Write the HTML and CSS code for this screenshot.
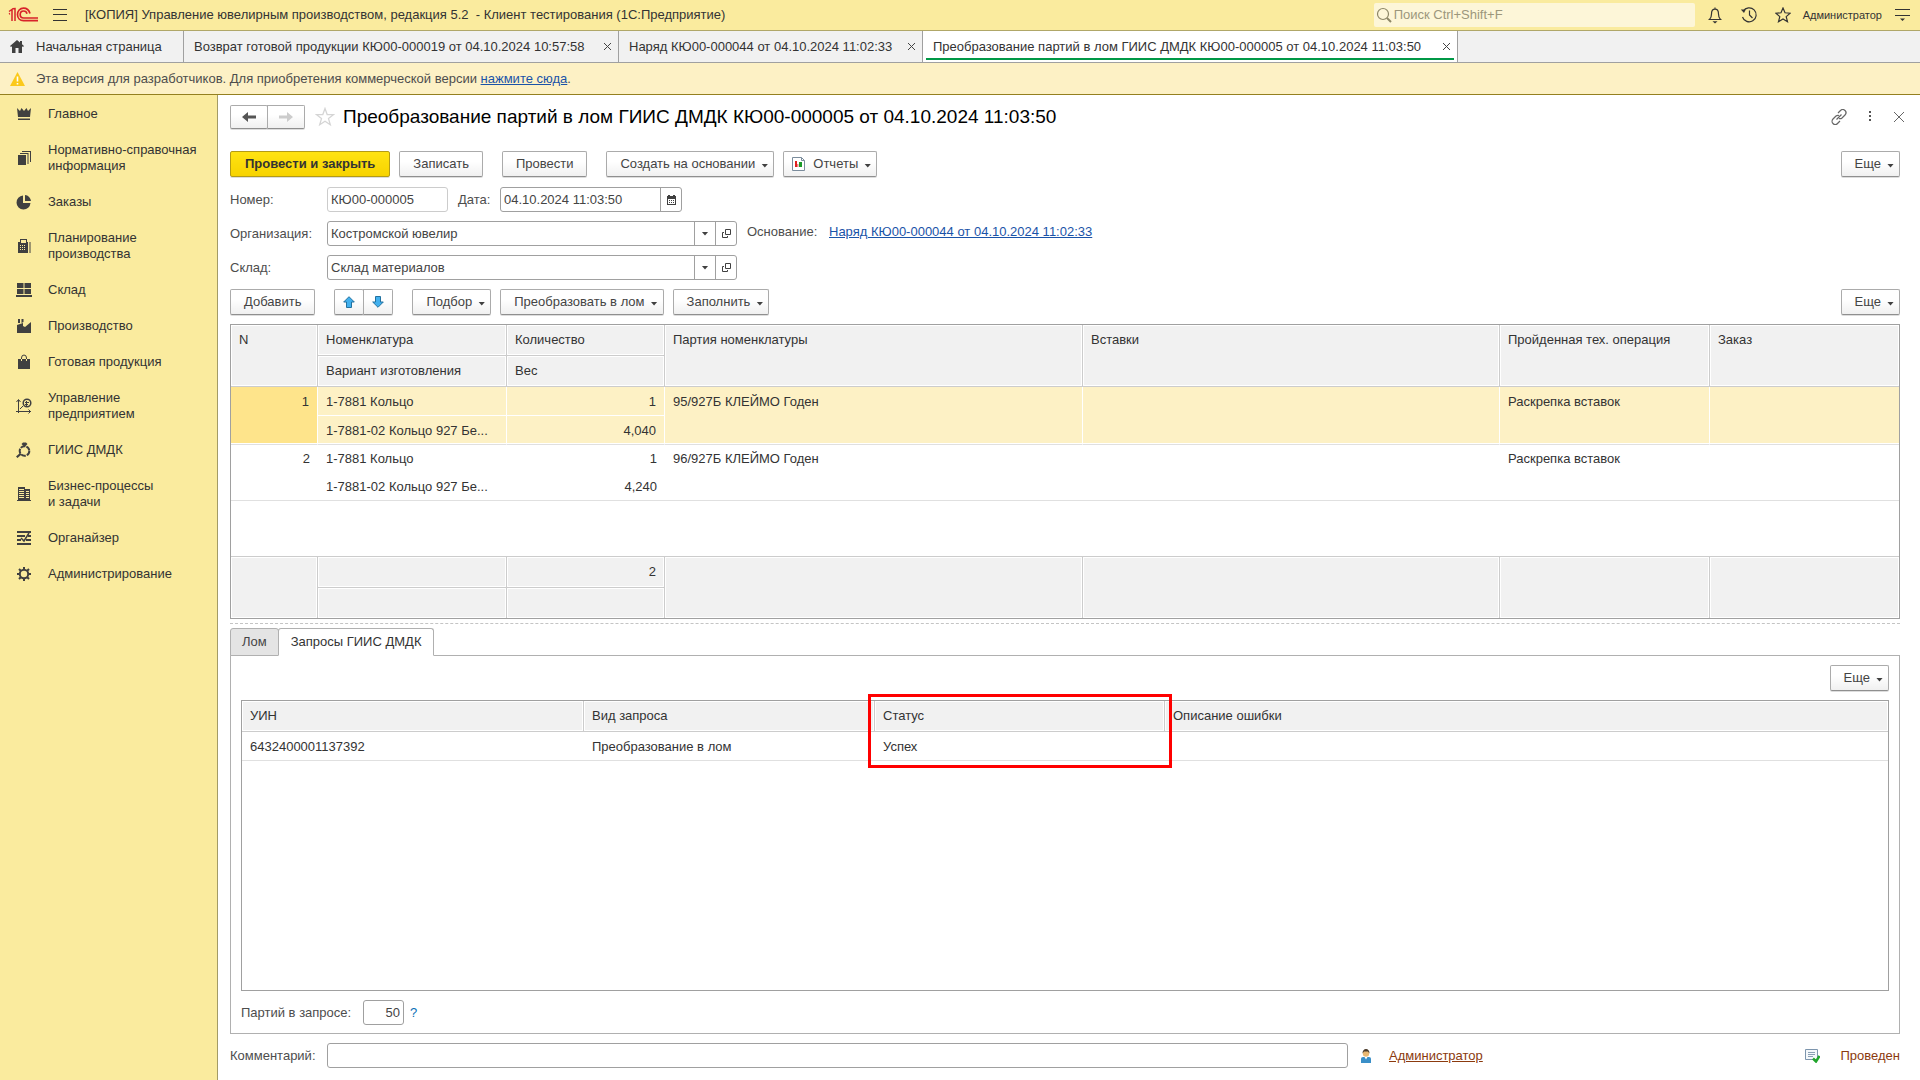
FILE: index.html
```html
<!DOCTYPE html>
<html lang="ru">
<head>
<meta charset="utf-8">
<title>Преобразование партий в лом ГИИС ДМДК</title>
<link rel="stylesheet" href="styles.css">
</head>
<body>
<header class="topbar">
  <svg class="logo" width="30" height="16" viewBox="0 0 30 16" fill="none" stroke="#d8232a"><path d="M1 4.500L4 2.500V14M1 7l1-.5M7 14V1.500L4.500 1.800" stroke-width="1.500"/><path d="M22 6.500C21 3 18.500 1.200 15.500 1.200c-3.500 0-6 2.800-6 6.300s2.500 6.200 6 6.200H30" stroke-width="1.700"/><path d="M19 6.800C18.600 5 17.300 4 15.600 4 13.500 4 12.200 5.600 12.200 7.500s1.400 3.500 3.400 3.500H30" stroke-width="1.700"/></svg>
  <button class="icon-btn burger" aria-label="Меню"><svg width="14" height="12" viewBox="0 0 14 12" stroke="#333"><path d="M0 .5h14M0 5.500h14M0 11.500h14"/></svg></button>
  <span class="app-title">[КОПИЯ] Управление ювелирным производством, редакция 5.2&nbsp; - Клиент тестирования (1С:Предприятие)</span>
  <div class="search">
    <svg width="16" height="16" viewBox="0 0 16 16" fill="none" stroke="#8d8767" stroke-width="1.200"><circle cx="7" cy="7" r="5.500"/><path d="M11 11l4 4" stroke-width="2"/></svg>
    <input type="text" placeholder="Поиск Ctrl+Shift+F" aria-label="Поиск">
  </div>
  <div class="top-tools">
    <button class="icon-btn" aria-label="Оповещения"><svg width="16" height="18" viewBox="0 0 16 18" fill="none" stroke="#333" stroke-width="1.200"><path d="M8 1.500v1.500M1.500 13.500h13M2.500 13.500c1.700-1.500 2-3 2-5.500C4.500 5 6 3.200 8 3.200S11.500 5 11.500 8c0 2.500.3 4 2 5.500"/><path d="M5.500 15.200h5L8 17.500z" fill="#333" stroke="none"/></svg></button>
    <button class="icon-btn" aria-label="История"><svg width="18" height="18" viewBox="0 0 18 18" fill="none" stroke="#333" stroke-width="1.200"><path d="M3.200 5.200A7 7 0 1 1 2.500 11"/><path d="M9.500 4.500V9l3 3"/><path d="M.8 3.500h5L4 7z" fill="#333" stroke="none"/></svg></button>
    <button class="icon-btn" aria-label="Избранное"><svg width="16" height="16" viewBox="0 0 16 16" fill="none" stroke="#333" stroke-width="1.200"><path d="M8 1l2 4.800 5.200.4-4 3.400 1.300 5.100L8 12l-4.500 2.700 1.300-5.100-4-3.400L6 5.800z"/></svg></button>
  </div>
  <span class="user">Администратор</span>
  <button class="icon-btn" aria-label="Настройки"><svg width="15" height="14" viewBox="0 0 15 14" stroke="#333"><path d="M0 1.500h15M0 7.500h15"/><path d="M5 10.500h5L7.500 13z" fill="#333" stroke="none"/></svg></button>
</header>

<nav class="tabs">
  <a class="tab tab-home" href="#"><svg width="14" height="13" viewBox="0 0 14 13" fill="#404040"><path d="M7 0L0 6l1 1 1-.8V13h3.500V8h3v5H12V6.200l1 .8 1-1-2-1.700V1h-2v1.600z"/></svg>Начальная страница</a>
  <div class="tab tab-return"><a href="#">Возврат готовой продукции КЮ00-000019 от 04.10.2024 10:57:58</a><button class="icon-btn" aria-label="Закрыть"><svg width="7" height="7" viewBox="0 0 7 7" stroke="#444"><path d="M0 0l7 7M7 0L0 7"/></svg></button></div>
  <div class="tab tab-order"><a href="#">Наряд КЮ00-000044 от 04.10.2024 11:02:33</a><button class="icon-btn" aria-label="Закрыть"><svg width="7" height="7" viewBox="0 0 7 7" stroke="#444"><path d="M0 0l7 7M7 0L0 7"/></svg></button></div>
  <div class="tab tab-scrap active"><a href="#">Преобразование партий в лом ГИИС ДМДК КЮ00-000005 от 04.10.2024 11:03:50</a><button class="icon-btn" aria-label="Закрыть"><svg width="7" height="7" viewBox="0 0 7 7" stroke="#444"><path d="M0 0l7 7M7 0L0 7"/></svg></button></div>
</nav>

<div class="banner">
  <svg width="15" height="14" viewBox="0 0 15 14"><path d="M7.500 0L15 14H0z" fill="#fbc91b"/><path d="M7.500 4.500v5M7.500 11v1.500" stroke="#fff" stroke-width="1.600"/></svg>
  <p>Эта версия для разработчиков. Для приобретения коммерческой версии <a href="#">нажмите сюда</a>.</p>
</div>

<div class="body">
  <aside class="sidebar">
    <a href="#"><svg viewBox="0 0 16 16"><path d="M1 2l3 3 1.500-3L8 5l2.500-3L12 5l3-3-1 9H2zM2 12.500h12V14H2z"/></svg>Главное</a>
    <a href="#"><svg viewBox="0 0 16 16"><path d="M2 5h8v10H2zM4 3h8.500v11h-1V4H4zM6 1h9v11h-1V2H6z"/></svg>Нормативно-справочная информация</a>
    <a href="#"><svg viewBox="0 0 16 16"><path d="M7 1.500A7 7 0 1 0 14.500 9H7zM9 1v6h6A6.500 6.500 0 0 0 9 1z"/></svg>Заказы</a>
    <a href="#"><svg viewBox="0 0 16 16"><path fill-rule="evenodd" d="M4 1h7v3h1v11H2V4h2zM5 2v3h5V2zM4 7v1h1V7zm2 0v1h1V7zm2 0v1h1V7zM4 9v1h1V9zm2 0v1h1V9zm2 0v1h1V9zm-4 2v1h1v-1zm2 0v1h1v-1zm2 0v1h1v-1zM13.500 4h1v11h-1z"/></svg>Планирование<br>производства</a>
    <a href="#"><svg viewBox="0 0 16 16"><path d="M1 1h6.500v5H1zM8.500 1H15v5H8.500zM1 7h6.500v5H1zM8.500 7H15v5H8.500zM0 13h16v2H0z"/></svg>Склад</a>
    <a href="#"><svg viewBox="0 0 16 16"><path d="M2 1h2v4H2zM5.500 1h2v3l-2 1zM1 7l6-2v3l2 1 6-5v11H1z"/></svg>Производство</a>
    <a href="#"><svg viewBox="0 0 16 16"><path d="M2 5h12v10H2z"/><path d="M5.500 5V4q0-3 2.500-3t2.500 3v1" fill="none" stroke="#404040"/><path d="M5.500 5v2M10.500 5v2" stroke="#faeb9e"/></svg>Готовая продукция</a>
    <a href="#"><svg viewBox="0 0 16 16"><path d="M2.500 15V2M0 13.500h15M.5 4l2-2.500 2 2.500M12.500 11.500l2 2-2 2M4 11l3-3" fill="none" stroke="#404040"/><circle cx="11" cy="5" r="3.800" fill="none" stroke="#404040" stroke-width="1.500"/><path d="M9 4h4v1H9zM9 6h3v1H9zM10 3h1v5h-1z"/></svg>Управление предприятием</a>
    <a href="#"><svg viewBox="0 0 16 16"><circle cx="8.500" cy="9" r="4.800" fill="none" stroke="#404040" stroke-width="2" stroke-dasharray="5 1"/><path d="M5.500 2l1.500-1.500h3L11.500 2 8.500 5zM4 11l1.500 1.500L1.500 16 0 14.500z"/></svg>ГИИС ДМДК</a>
    <a href="#"><svg viewBox="0 0 16 16"><path fill-rule="evenodd" d="M2 1h7v2h5v11h1v1H1v-1h1zM3 3v1h5V3zm0 2v1h5V5zm0 2v1h5V7zm0 2v1h5V9zm0 2v1h5v-1zM10 5v1h3V5zm0 2v1h3V7zm0 2v1h3V9zm0 2v1h3v-1z"/></svg>Бизнес-процессы<br>и задачи</a>
    <a href="#"><svg viewBox="0 0 16 16"><path d="M1 1h14v2H1zM1 5h8v2H1zM12 5h3v2h-3zM1 9h4v2H1zM10 9h5v2h-5zM1 13h14v2H1z"/><path d="M5 8l3 3 5-8" fill="none" stroke="#404040" stroke-width="1.500"/></svg>Органайзер</a>
    <a href="#"><svg viewBox="0 0 16 16"><circle cx="8" cy="8" r="4.200" fill="none" stroke="#404040" stroke-width="2"/><path d="M8 1v3M8 12v3M1 8h3M12 8h3M3 3l2 2M11 11l2 2M13 3l-2 2M5 11l-2 2" stroke="#404040" stroke-width="2"/></svg>Администрирование</a>
  </aside>

  <main class="main">
    <div class="head">
      <div class="pair nav-pair">
        <button class="btn" aria-label="Назад"><svg width="14" height="10" viewBox="0 0 14 10" fill="#555"><path d="M0 5l6-5v3.500h8v3H6V10z"/></svg></button>
        <button class="btn" aria-label="Вперед"><svg width="14" height="10" viewBox="0 0 14 10" fill="#ccc"><path d="M14 5L8 0v3.500H0v3h8V10z"/></svg></button>
      </div>
      <button class="icon-btn fav" aria-label="В избранное"><svg width="20" height="20" viewBox="0 0 20 20" fill="none" stroke="#d5d5d5" stroke-width="1.300"><path d="M10 1.500l2.200 6 6.300.2-5 3.900 1.800 6.200L10 14.200l-5.300 3.600 1.800-6.200-5-3.900 6.300-.2z"/></svg></button>
      <h1>Преобразование партий в лом ГИИС ДМДК КЮ00-000005 от 04.10.2024 11:03:50</h1>
      <div class="head-tools">
        <button class="icon-btn" aria-label="Ссылка"><svg width="16" height="16" viewBox="0 0 16 16" fill="none" stroke="#666" stroke-width="1.200"><path d="M7 4l2.500-2.500a2.900 2.900 0 0 1 4.500 4.500L11 9a3 3 0 0 1-3 .5M9 12l-2.500 2.500A2.900 2.900 0 0 1 2 10l3-3a3 3 0 0 1 3-.5M5.500 10.500l5-5"/></svg></button>
        <button class="icon-btn" aria-label="Действия"><svg width="3" height="11" viewBox="0 0 3 11" fill="#555"><path d="M0 0h2v2H0zM0 4h2v2H0zM0 8h2v2H0z"/></svg></button>
        <button class="icon-btn" aria-label="Закрыть"><svg width="10" height="10" viewBox="0 0 10 10" stroke="#666"><path d="M0 0l10 10M10 0L0 10"/></svg></button>
      </div>
    </div>

    <div class="toolbar">
      <button class="btn primary">Провести и закрыть</button>
      <button class="btn">Записать</button>
      <button class="btn apart">Провести</button>
      <button class="btn drop apart">Создать на основании</button>
      <button class="btn drop with-icon"><svg width="13" height="14" viewBox="0 0 13 14"><path d="M.5.500h9l3 3v10H.5z" fill="#fff" stroke="#7b8c9c"/><path d="M9.500.500v3h3" fill="none" stroke="#7b8c9c"/><path d="M3 4h2v6H3z" fill="#e02020"/><path d="M5 7h1.500v3H5z" fill="#e88"/><path d="M7 5h3v5H7z" fill="#1a9a28"/></svg>Отчеты</button>
      <button class="btn drop last">Еще</button>
    </div>

    <div class="form">
      <div class="row">
        <label for="num">Номер:</label>
        <input id="num" class="field num" type="text" value="КЮ00-000005">
        <label class="date-label" for="date">Дата:</label>
        <div class="combo date"><input id="date" type="text" value="04.10.2024 11:03:50"><button aria-label="Календарь"><svg width="9" height="10" viewBox="0 0 9 10"><path fill="#404040" fill-rule="evenodd" d="M0 1h1V0h2v1h3V0h2v1h1v9H0zM1 4v5h7V4z"/><path fill="#404040" d="M2 5h1v1H2zM4 5h1v1H4zM6 5h1v1H6zM2 7h1v1H2zM4 7h1v1H4zM6 7h1v1H6z"/></svg></button></div>
      </div>
      <div class="row">
        <label for="org">Организация:</label>
        <div class="combo"><input id="org" type="text" value="Костромской ювелир"><button aria-label="Выбрать"><i class="caret"></i></button><button aria-label="Открыть"><svg width="9" height="9" viewBox="0 0 9 9" fill="none" stroke="#404040"><path d="M3.500.500h5v5h-5zM2 3.500H.5v5h5V7"/></svg></button></div>
        <span class="basis">Основание:</span>
        <a class="basis-link" href="#">Наряд КЮ00-000044 от 04.10.2024 11:02:33</a>
      </div>
      <div class="row">
        <label for="store">Склад:</label>
        <div class="combo"><input id="store" type="text" value="Склад материалов"><button aria-label="Выбрать"><i class="caret"></i></button><button aria-label="Открыть"><svg width="9" height="9" viewBox="0 0 9 9" fill="none" stroke="#404040"><path d="M3.500.500h5v5h-5zM2 3.500H.5v5h5V7"/></svg></button></div>
      </div>
    </div>

    <div class="toolbar">
      <button class="btn">Добавить</button>
      <div class="pair apart">
        <button class="btn" aria-label="Вверх"><svg width="12" height="12" viewBox="0 0 12 12" fill="#41b0ee" stroke="#23719f"><path d="M6 .7L11.300 6H8.500v5.500h-5V6H.7z"/></svg></button>
        <button class="btn" aria-label="Вниз"><svg width="12" height="12" viewBox="0 0 12 12" fill="#41b0ee" stroke="#23719f"><path d="M6 11.300L.7 6h2.800V.5h5V6h2.800z"/></svg></button>
      </div>
      <button class="btn drop apart">Подбор</button>
      <button class="btn drop">Преобразовать в лом</button>
      <button class="btn drop">Заполнить</button>
      <button class="btn drop last">Еще</button>
    </div>

    <table class="grid items">
      <colgroup><col class="c-n"><col class="c-name"><col class="c-qty"><col class="c-batch"><col class="c-ins"><col class="c-op"><col></colgroup>
      <thead>
        <tr><th rowspan="2">N</th><th>Номенклатура</th><th>Количество</th><th rowspan="2">Партия номенклатуры</th><th rowspan="2">Вставки</th><th rowspan="2">Пройденная тех. операция</th><th rowspan="2">Заказ</th></tr>
        <tr><th>Вариант изготовления</th><th>Вес</th></tr>
      </thead>
      <tbody>
        <tr class="sel"><td class="r cur" rowspan="2">1</td><td class="up">1-7881 Кольцо</td><td class="up r">1</td><td rowspan="2">95/927Б КЛЕЙМО Годен</td><td rowspan="2"></td><td rowspan="2">Раскрепка вставок</td><td rowspan="2"></td></tr>
        <tr class="sel"><td>1-7881-02 Кольцо 927 Бе...</td><td class="r">4,040</td></tr>
        <tr class="short"><td class="r" rowspan="2">2</td><td class="up">1-7881 Кольцо</td><td class="up r">1</td><td rowspan="2">96/927Б КЛЕЙМО Годен</td><td rowspan="2"></td><td rowspan="2">Раскрепка вставок</td><td rowspan="2"></td></tr>
        <tr><td>1-7881-02 Кольцо 927 Бе...</td><td class="r">4,240</td></tr>
        <tr class="blank"><td colspan="7"></td></tr>
      </tbody>
      <tfoot>
        <tr><td rowspan="2"></td><td></td><td class="r">2</td><td rowspan="2"></td><td rowspan="2"></td><td rowspan="2"></td><td rowspan="2"></td></tr>
        <tr><td></td><td></td></tr>
      </tfoot>
    </table>

    <div class="splitter"></div>

    <div class="ptabs" role="tablist">
      <button class="ptab" role="tab">Лом</button>
      <button class="ptab on" role="tab">Запросы ГИИС ДМДК</button>
    </div>
    <section class="panel">
      <button class="btn drop panel-more">Еще</button>
      <div class="requests">
        <table class="grid">
          <colgroup><col class="c-uin"><col class="c-kind"><col class="c-status"><col></colgroup>
          <thead><tr><th>УИН</th><th>Вид запроса</th><th>Статус</th><th>Описание ошибки</th></tr></thead>
          <tbody><tr><td>6432400001137392</td><td>Преобразование в лом</td><td>Успех</td><td></td></tr></tbody>
        </table>
        <div class="mark"></div>
      </div>
      <div class="batch">
        <label for="batch">Партий в запросе:</label>
        <input id="batch" class="field" type="text" value="50">
        <a href="#">?</a>
      </div>
    </section>

    <footer class="foot">
      <label for="comment">Комментарий:</label>
      <input id="comment" class="field" type="text">
      <svg width="10" height="14" viewBox="0 0 10 14"><path d="M0 14V9.500Q0 8 2 8h6q2 0 2 1.500V14z" fill="#3a8fc8"/><path d="M3.500 8L5 10.500 6.500 8z" fill="#fff"/><circle cx="5" cy="4.500" r="3.200" fill="#e9b872"/><path d="M1.500 4.500C1.500 1.500 3 0 5 0s3.500 1.500 3.500 4.500L7 2.500H3z" fill="#4a3a28"/></svg>
      <a class="author" href="#">Администратор</a>
      <div class="posted">
        <svg width="15" height="14" viewBox="0 0 15 14" fill="none"><path d="M.5.500h12v10H.5z" fill="#f4f8fb" stroke="#7d95ad"/><path d="M3 3.500h7M3 5.500h7M3 7.500h5" stroke="#8aa0b5"/><path d="M8 9.500l3 3L14.500 7" stroke="#21a52c" stroke-width="2.500"/></svg>
        <span>Проведен</span>
      </div>
    </footer>
  </main>
</div>
</body>
</html>
```
FILE: styles.css
```css
* { box-sizing: border-box; }
body {
  margin: 0;
  min-height: 100vh;
  display: flex;
  flex-direction: column;
  font: 13px/16px "Liberation Sans", Arial, sans-serif;
  color: #333;
  background: #fff;
}
button, input { font: inherit; color: inherit; margin: 0; }
svg { display: block; flex: none; }
p, h1 { margin: 0; }
a { color: #1a53a8; }

.icon-btn { display: flex; padding: 0; border: 0; background: none; }

/* top bar */
.topbar {
  display: flex;
  align-items: center;
  height: 31px;
  padding: 0 10px 0 8px;
  background: #faeb9e;
  border-bottom: 1px solid #b0a768;
}
.burger { margin: 0 18px 0 15px; }
.app-title { flex: 1; white-space: nowrap; }
.search {
  display: flex;
  align-items: center;
  gap: 2px;
  width: 321px;
  height: 24px;
  padding-left: 2px;
  background: #fdf6d8;
  border-radius: 2px;
}
.search input { flex: 1; min-width: 0; padding: 0; border: 0; outline: 0; background: none; }
.search input::placeholder { color: #9c977c; opacity: 1; }
.top-tools { display: flex; align-items: center; gap: 17px; margin: 0 12px; }
.user { margin-right: 13px; font-size: 11px; white-space: nowrap; }

/* window tabs */
.tabs {
  display: flex;
  height: 32px;
  background: #f1f1f1;
  border-bottom: 1px solid #a0a0a0;
}
.tab {
  display: flex;
  align-items: center;
  justify-content: space-between;
  padding: 0 7px 0 10px;
  border-right: 1px solid #a0a0a0;
  color: #333;
  white-space: nowrap;
}
.tab a, .tab-home { color: #333; text-decoration: none; }
.tab-home { width: 184px; justify-content: flex-start; gap: 12px; }
.tab-return { width: 435px; }
.tab-order { width: 304px; }
.tab-scrap { width: 535px; }
.tab.active {
  background: linear-gradient(#009846, #009846) 3px 27px / calc(100% - 6px) 2px no-repeat #fff;
}

/* warning strip */
.banner {
  display: flex;
  align-items: center;
  gap: 11px;
  height: 32px;
  padding-left: 10px;
  background: #fdf1c5;
  border-bottom: 1px solid #94801f;
  color: #4d4d4d;
}

.body { flex: 1; display: flex; }

/* sections */
.sidebar {
  width: 218px;
  padding-top: 1px;
  background: #faeb9e;
  border-right: 1px solid #a39b66;
}
.sidebar a {
  display: flex;
  gap: 16px;
  align-items: center;
  padding: 10px 12px 10px 16px;
  color: #333;
  text-decoration: none;
}
.sidebar svg { width: 16px; height: 16px; fill: #404040; }

/* form */
.main {
  flex: 1;
  min-width: 0;
  display: flex;
  flex-direction: column;
  padding: 9px 20px 12px 12px;
}
.head { display: flex; align-items: center; height: 25px; margin-bottom: 22px; }
h1 { flex: 1; font-size: 19px; line-height: 24px; font-weight: 400; color: #000; white-space: nowrap; }
.fav { margin: 0 8px 0 10px; }
.head-tools { display: flex; align-items: center; gap: 22px; margin-right: -4px; }

.toolbar { display: flex; align-items: center; gap: 9px; }
.btn {
  display: flex;
  align-items: center;
  justify-content: center;
  height: 26px;
  padding: 0 13px;
  border: 1px solid #ababab;
  border-bottom-color: #8f8f8f;
  border-radius: 2px;
  background: linear-gradient(#fff 40%, #f0f0f0);
  box-shadow: 0 1px 0 #ddd;
  color: #444;
  white-space: nowrap;
}
.btn.primary {
  padding: 0 14px;
  background: linear-gradient(#ffe312, #f7d300);
  border-color: #b39b16;
  color: #333;
  font-weight: 700;
}
.drop::after, .caret {
  content: "";
  width: 7px;
  height: 4px;
  background: #404040;
  clip-path: polygon(0 0, 100% 0, 50% 100%);
}
.btn.drop { padding: 0 5px 0 13px; }
.drop::after { margin: 3px 0 0 6px; }
.btn.with-icon { padding-left: 8px; }
.with-icon svg { margin-right: 8px; }
.apart { margin-left: 10px; }
.last { margin-left: auto; }
.pair { display: flex; }
.pair .btn { width: 30px; padding: 0; }
.pair .btn + .btn { margin-left: -1px; border-radius: 0 2px 2px 0; }
.nav-pair .btn { width: 38px; height: 24px; }

.form { display: grid; gap: 9px; margin: 10px 0 9px; color: #4d4d4d; }
.row { display: flex; align-items: center; height: 25px; }
.row > label:first-child, .foot > label { width: 97px; }
.field, .combo { height: 25px; border: 1px solid #a0a0a0; border-radius: 3px; background: #fff; }
.field { padding: 0 3px; outline: 0; color: #444; }
.num { width: 121px; border-color: #ccc; }
.row .date-label { width: 42px; margin-left: 10px; }
.combo { display: flex; width: 410px; }
.combo.date { width: 182px; }
.combo input { flex: 1; min-width: 0; padding: 0 3px; border: 0; outline: 0; background: none; color: #444; }
.combo button {
  display: flex;
  align-items: center;
  justify-content: center;
  width: 21px;
  padding: 0;
  border: 0;
  border-left: 1px solid #a0a0a0;
  background: none;
}
.basis { width: 82px; margin-left: 10px; padding-bottom: 4px; }
.basis-link { padding-bottom: 4px; }

/* tables */
.grid { width: 100%; table-layout: fixed; border-collapse: separate; border-spacing: 0; }
.grid th, .grid td {
  height: 31px;
  padding: 0 8px;
  border: 0 solid #ccc;
  border-width: 0 1px 1px 0;
  text-align: left;
  font-weight: 400;
  white-space: nowrap;
  overflow: hidden;
}
.grid th, .grid tfoot td { background: #f1f1f1; box-shadow: inset 0 0 0 1px #fff; }
.grid [rowspan] { vertical-align: top; padding-top: 7px; }
.grid tr > :last-child:not(:nth-child(-n+3)) { border-right: 0; }
.grid tbody td { height: 29px; padding-top: 1px; border-right: 0; border-bottom-color: #e0e0e0; }
.grid tbody td[rowspan] { padding-top: 7px; }
.grid tbody .up { border-bottom: 0; }
.grid .short .up { height: 27px; }
.grid .short td[rowspan] { padding-top: 6px; }
.grid .r { text-align: right; }
.grid .sel td { background: #fdf1c5; border-right: 1px solid #fff; box-shadow: inset 0 -1px 0 #fff; }
.grid .sel .cur { background: #fee48b; }
.grid .blank td { height: 56px; border-bottom-color: #ccc; }
.grid tfoot tr:first-child td[rowspan], .grid tfoot tr:last-child td { border-bottom: 0; }
.grid tfoot tr:last-child td { height: 30px; }
.items { border: 1px solid #a0a0a0; margin-top: 9px; }
.c-n { width: 87px; }
.c-name { width: 189px; }
.c-qty { width: 158px; }
.c-batch { width: 418px; }
.c-ins { width: 417px; }
.c-op { width: 210px; }
.c-uin { width: 342px; }
.c-kind { width: 291px; }
.c-status { width: 290px; }

.splitter { margin: 4px 0; border-top: 1px dashed #c4c4c4; }

/* lower pages */
.ptabs { display: flex; margin-bottom: -1px; z-index: 1; }
.ptab {
  height: 28px;
  padding: 0 11px 1px;
  border: 1px solid #b0b0b0;
  border-radius: 3px 3px 0 0;
  background: #e4e4e4;
  color: #444;
}
.ptab.on { margin-left: -1px; padding: 0 12px 1px; border-bottom-color: #fff; background: #fff; color: #333; }
.panel {
  flex: 1;
  display: flex;
  flex-direction: column;
  padding: 9px 10px 8px;
  border: 1px solid #b0b0b0;
}
.panel-more { align-self: flex-end; margin-bottom: 9px; }
.requests { position: relative; flex: 1; border: 1px solid #a0a0a0; }
.mark {
  position: absolute;
  left: 626px;
  top: -7px;
  width: 304px;
  height: 74px;
  border: 3px solid #f00;
}
.batch { display: flex; align-items: center; margin-top: 9px; color: #4d4d4d; }
.batch label { width: 122px; }
.batch .field { width: 41px; margin-right: 6px; text-align: right; }
.batch a { color: #0a6fb5; text-decoration: none; }

.foot { display: flex; align-items: center; margin-top: 9px; color: #4d4d4d; }
.foot .field { flex: 1; max-width: 1021px; }
.foot > svg { margin: 0 18px 0 13px; }
.foot .author { color: #8b3a0e; }
.posted { display: flex; align-items: center; gap: 20px; margin-left: auto; color: #8b3a0e; }
```
